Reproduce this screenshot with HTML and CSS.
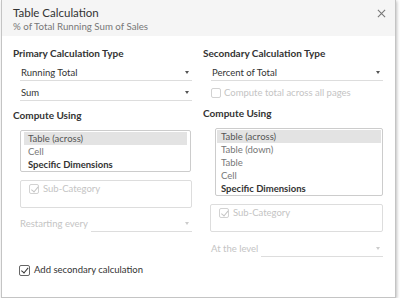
FILE: index.html
```html
<!DOCTYPE html>
<html lang="en">
<head>
    <meta charset="UTF-8">
    <title>Table Calculation</title>
    <link rel="stylesheet" href="styles.css">
</head>
<body>
    <div class="dialog">
        <div class="dialog-header">
            <div class="titles">
                <div class="title">Table Calculation</div>
                <div class="subtitle">% of Total Running Sum of Sales</div>
            </div>
            <svg class="close" width="10" height="10" viewBox="0 0 10 10"><path d="M1 1L9 9M9 1L1 9" stroke="#777" stroke-width="1.2"/></svg>
        </div>
        <div class="dialog-body">
            <div class="column">
                <div class="section-title">Primary Calculation Type</div>
                <div class="dropdown first"><span>Running Total</span><span class="caret"></span></div>
                <div class="dropdown"><span>Sum</span><span class="caret"></span></div>

                <div class="section-title compute">Compute Using</div>
                <ul class="listbox">
                    <li class="selected">Table (across)</li>
                    <li class="muted">Cell</li>
                    <li class="strong">Specific Dimensions</li>
                </ul>
                <div class="dims">
                    <label class="check disabled"><span class="box checked"></span>Sub-Category</label>
                </div>
                <div class="inline-field">
                    <span class="label">Restarting every</span>
                    <div class="dropdown"><span></span><span class="caret"></span></div>
                </div>
                <label class="check secondary"><span class="box checked dark"></span>Add secondary calculation</label>
            </div>
            <div class="column right">
                <div class="section-title">Secondary Calculation Type</div>
                <div class="dropdown first"><span>Percent of Total</span><span class="caret"></span></div>
                <label class="check disabled pages"><span class="box"></span>Compute total across all pages</label>

                <div class="section-title compute">Compute Using</div>
                <ul class="listbox tall">
                    <li class="selected">Table (across)</li>
                    <li class="muted">Table (down)</li>
                    <li class="muted">Table</li>
                    <li class="muted">Cell</li>
                    <li class="strong">Specific Dimensions</li>
                </ul>
                <div class="dims">
                    <label class="check disabled"><span class="box checked"></span>Sub-Category</label>
                </div>
                <div class="inline-field">
                    <span class="label">At the level</span>
                    <div class="dropdown"><span></span><span class="caret"></span></div>
                </div>
            </div>
        </div>
    </div>
</body>
</html>
```

FILE: styles.css
```css
body {
    margin: 0;
    font-family: Lato, "Open Sans", sans-serif;
    font-size: 9.5px;
    color: #333;
    background: #fff;
}

.dialog {
    margin-left: 1px;
    width: 395px;
    height: 298px;
    border: 1px solid #c4c4c4;
    border-top: none;
    box-shadow: 1px 1px 3px rgba(0, 0, 0, 0.25);
    background: #fff;
    box-sizing: border-box;
}

.dialog-header {
    display: flex;
    justify-content: space-between;
    align-items: flex-start;
    background: #f5f5f5;
    height: 36px;
    padding: 6px 9px 0 11px;
    box-sizing: border-box;
}

.title {
    font-size: 11.5px;
    color: #333;
    line-height: 14px;
}

.subtitle {
    font-size: 9.7px;
    color: #777;
    line-height: 12px;
}

.close {
    margin-top: 3px;
    width: 9px;
    height: 9px;
}

.dialog-body {
    display: grid;
    grid-template-columns: 179px 180px;
    column-gap: 11px;
    padding: 11px 0 0 11px;
}

.column {
    display: flex;
    flex-direction: column;
}

.section-title {
    font-weight: bold;
    font-size: 10px;
    color: #333;
    line-height: 12px;
    height: 12px;
}

.section-title.compute {
    margin-top: 8px;
}

.dropdown {
    display: flex;
    justify-content: space-between;
    align-items: center;
    margin-left: 7px;
    height: 20px;
    padding: 4px 3px 0 1px;
    border-bottom: 1px solid #ddd;
    box-sizing: border-box;
}

.dropdown.first {
    margin-top: 2px;
}

.right .dropdown {
    margin-left: 8px;
}

.caret {
    width: 0;
    height: 0;
    border-left: 2.5px solid transparent;
    border-right: 2.5px solid transparent;
    border-top: 3px solid #555;
}

.check {
    display: flex;
    align-items: center;
    gap: 4px;
    line-height: 12px;
    height: 12px;
}

.check.disabled {
    color: #c4c4c4;
}

.box {
    width: 10px;
    height: 10px;
    border: 1px solid #d2d2d2;
    border-radius: 2px;
    position: relative;
    box-sizing: border-box;
    flex-shrink: 0;
}

.box.checked::after {
    content: "";
    position: absolute;
    left: 2.5px;
    top: 0px;
    width: 2.5px;
    height: 5.5px;
    border-right: 1px solid #c4c4c4;
    border-bottom: 1px solid #c4c4c4;
    transform: rotate(40deg);
}

.box.dark {
    width: 11px;
    height: 11px;
    border-color: #666;
}

.box.dark::after {
    left: 3px;
    border-color: #333;
}

.check.pages {
    margin: 6px 0 0 8px;
    gap: 3px;
}

.listbox {
    list-style: none;
    margin: 9px 1px 0 7px;
    padding: 1px 3px 0;
    border: 1px solid #ccc;
    border-radius: 2px;
}

.right .listbox {
    margin: 9px 0 0 12px;
    padding: 1px 1px 0;
}

.listbox li {
    line-height: 13px;
    padding-left: 4px;
    color: #555;
}

.listbox li.selected {
    background: #e3e3e3;
}

.listbox li.muted {
    color: #777;
}

.listbox li.strong {
    font-weight: bold;
    color: #333;
}

.dims {
    margin: 8px 0 0 7px;
    height: 28px;
    border: 1px solid #ddd;
    border-radius: 2px;
    padding: 2px 8px;
    box-sizing: border-box;
}

.inline-field {
    display: flex;
    align-items: flex-end;
    margin: 4px 0 0 7px;
}

.right .inline-field {
    margin: 5px 0 0 8px;
}

.inline-field .label {
    color: #c4c4c4;
    line-height: 14px;
    margin-right: 3px;
    padding-bottom: 1px;
}

.inline-field .dropdown {
    flex: 1;
    margin-left: 0;
}

.inline-field .caret {
    border-top-color: #ccc;
}

.check.secondary {
    margin: 32px 0 0 6px;
}
```
